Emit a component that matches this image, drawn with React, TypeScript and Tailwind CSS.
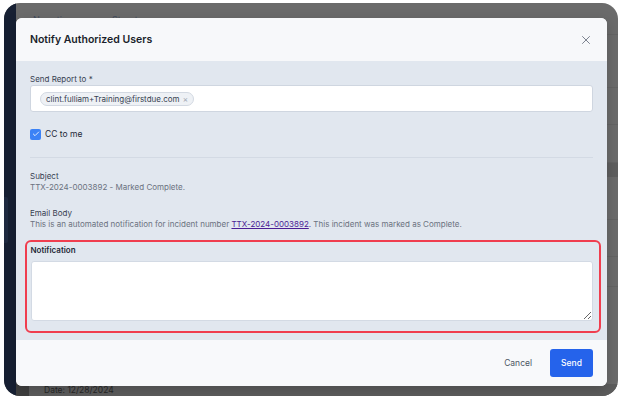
import { X, Check } from "lucide-react";

const font = "font-['Inter',sans-serif]";

export default function App() {
  return (
    <div className={`w-[621px] h-[399px] bg-white pl-[4px] pt-[3px] ${font}`}>
      {/* Screenshot frame */}
      <div className="w-[614px] h-[393px] rounded-[16px] overflow-hidden flex bg-[#6b6b6b]">
        {/* Sidebar */}
        <div className="w-[12px] h-full bg-[#172033] flex flex-col pt-[194px]">
          <div className="w-[4px] h-[46px] rounded-r-[2px] bg-[#1f2a40]" />
        </div>

        {/* Page behind the overlay */}
        <div className="flex-1 h-full relative flex flex-col">
          <div className="h-[32px] flex items-start gap-[40px] pl-[17px] pt-[10px] text-[9px] text-[#3f4a5e] border-b border-[#646464]">
            <span>Narrative</span>
            <span>Structure</span>
          </div>
          <div className="h-[53px] border-b border-[#646464]" />
          <div className="h-[37px] border-b border-[#646464]" />
          <div className="h-[38px] border-b border-[#646464]" />
          <div className="h-[14px] bg-[#5f5f5f]" />
          <div className="h-[43px] border-b border-[#646464]" />
          <div className="h-[37px] border-b border-[#646464]" />
          <div className="h-[30px] border-b border-[#646464]" />
          <div className="flex-1 flex items-end">
            <div className="w-[13px] h-[12px] bg-[#3f3f3f]" />
            <div className="flex-1 h-[12px] bg-[#5d5d5d] pl-[15px] text-[8.5px] leading-[12px] text-[#272727]">
              Date: 12/28/2024
            </div>
          </div>

          {/* Modal */}
          <div className="absolute left-0 top-[15px] w-[591px] h-[368px] rounded-[6px] overflow-hidden flex flex-col bg-[#f8f9fb] shadow-[0_4px_14px_rgba(0,0,0,0.18)]">
            {/* Header */}
            <div className="h-[43px] shrink-0 flex items-center justify-between pl-[14px] pr-[14px] bg-[#f7f8fa]">
              <h2 className="text-[10.5px] font-semibold text-[#1a1f2b]">Notify Authorized Users</h2>
              <X className="w-[14px] h-[14px] text-[#6b7280]" strokeWidth={1.5} />
            </div>

            {/* Body */}
            <div className="h-[279px] shrink-0 bg-[#e1e7ef] px-[14px] pt-[14px] flex flex-col text-[8px]">
              <label className="leading-[9px] h-[9px] text-[#374151]">Send Report to *</label>
              <div className="mt-[1px] h-[27px] bg-white border border-[#cfd6e0] rounded-[3px] flex items-center pl-[9px]">
                <span className="h-[14px] rounded-full border border-[#d3d9e2] bg-[#eef1f5] flex items-center gap-[3px] px-[5px] text-[#374151]">
                  clint.fulliam+Training@firstdue.com
                  <span className="text-[#9ca3af] text-[8px]">×</span>
                </span>
              </div>

              <div className="mt-[16px] flex items-center gap-[4px]">
                <span className="w-[11px] h-[11px] rounded-[2px] bg-[#3b82f6] flex items-center justify-center">
                  <Check className="w-[8px] h-[8px] text-white" strokeWidth={2.5} />
                </span>
                <span className="text-[#1f2937] text-[8.5px]">CC to me</span>
              </div>

              <div className="mt-[16px] h-px bg-[#d3dae4]" />

              <div className="mt-[13px] leading-[11px] text-[#374151]">Subject</div>
              <div className="leading-[11px] text-[#6b7280]">TTX-2024-0003892 - Marked Complete.</div>

              <div className="mt-[15px] leading-[11px] text-[#374151]">Email Body</div>
              <div className="leading-[11px] text-[#6b7280]">
                This is an automated notification for incident number{" "}
                <span className="text-[#4c1d95] underline">TTX-2024-0003892</span>
                <span className="text-[#4c1d95]">.</span> This incident was marked as Complete.
              </div>

              <div className="mt-[10px] -ml-[5px] -mr-[8px] h-[93px] rounded-[6px] border-2 border-[#f03e4f] pl-[3.5px] pr-[6.5px] pt-[3px] flex flex-col">
                <div className="leading-[11px] font-semibold text-[#1f2937]">Notification</div>
                <textarea className="mt-[5px] h-[60px] bg-white border border-[#d3dae4] rounded-[3px] resize-y outline-none" />
              </div>
            </div>

            {/* Footer */}
            <div className="flex-1 flex items-center justify-end gap-[18px] pr-[14px] bg-[#f8f9fb] text-[8.5px]">
              <button className="text-[#4b5563]">Cancel</button>
              <button className="w-[43px] h-[28px] rounded-[3px] bg-[#2563eb] text-white font-medium">Send</button>
            </div>
          </div>
        </div>
      </div>
    </div>
  );
}
